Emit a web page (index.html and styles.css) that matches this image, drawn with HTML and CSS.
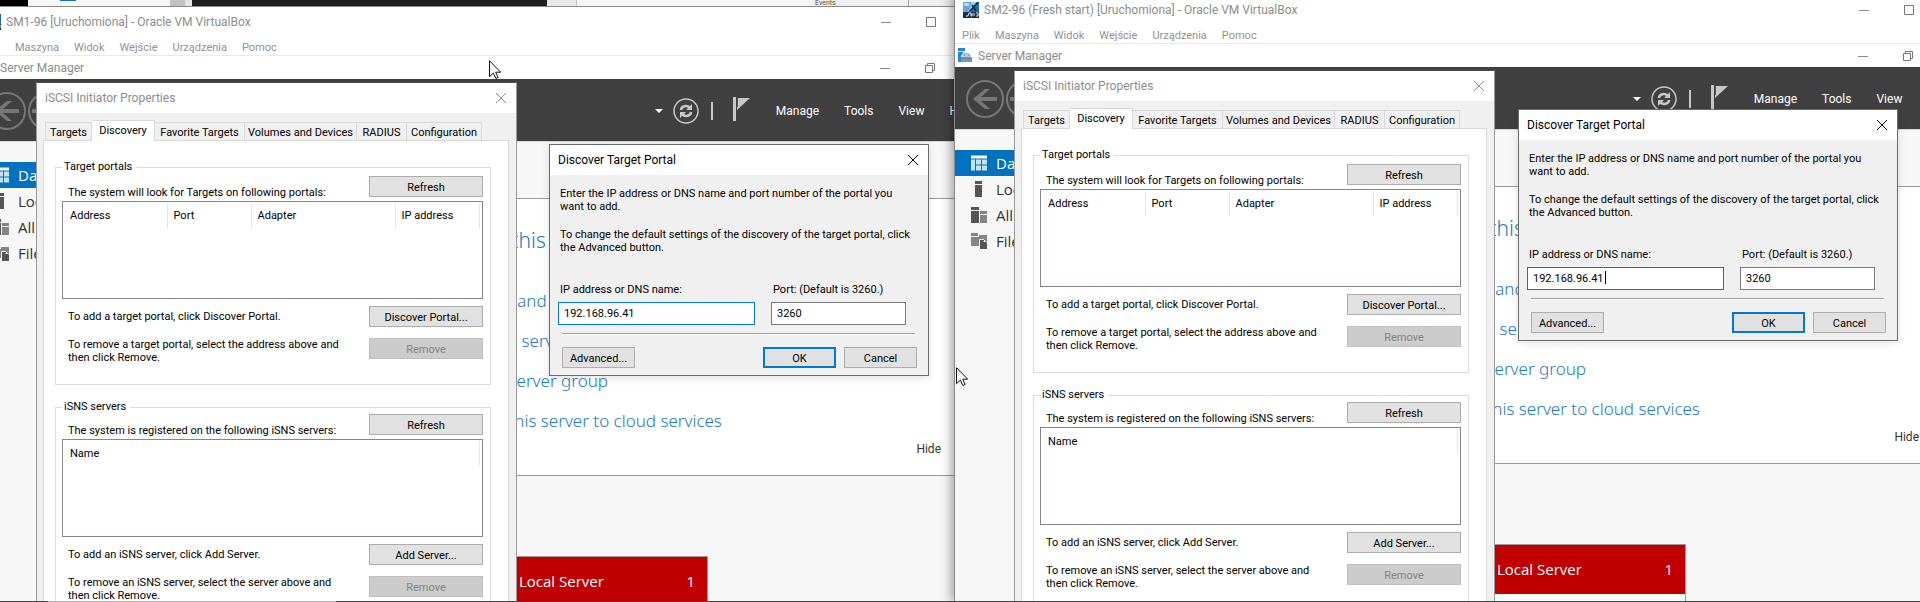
FILE: index.html
```
<!DOCTYPE html>
<html lang="en">
<head>
<meta charset="utf-8">
<title>Oracle VM VirtualBox</title>
<link rel="stylesheet" href="styles.css">
</head>
<body>
<svg class="defs" aria-hidden="true">
  <symbol id="i-vm" viewBox="0 0 16 16">
    <rect width="16" height="16" fill="#1b6fae"/><path d="M0 0h7l2 5-3 5H0z" fill="#5aa9de"/><rect x="1" y="1" width="5" height="3" fill="#c7d3dc"/>
    <path d="M8 0l6 0-5 7-3 2z" fill="#8fd0f5"/><path d="M15 0L7 9M9 3l4 6" stroke="#123" stroke-width="1.5"/><path d="M0 10h16v6H0z" fill="#17314a"/>
    <path d="M3 14h2l1-3h2v3h1v-3m2 0v3m2-3h2v3h-2" stroke="#dfe9f1" fill="none"/>
  </symbol>
  <symbol id="i-sm" viewBox="0 0 15 15">
    <rect width="7" height="3" fill="#1e88dc"/><path d="M0 4h6l-3 4v6H0z" fill="#1e88dc"/><path d="M3 9h11v5H3z" fill="#7b98b0"/>
    <path d="M6 8V6h5v2M3 10.500h11" fill="none" stroke="#6485a0"/><path d="M4 8h9" stroke="#7b98b0"/>
  </symbol>
  <symbol id="i-min" viewBox="0 0 10 10"><path d="M0 5.500h10" stroke="#8a8a8a"/></symbol>
  <symbol id="i-max" viewBox="0 0 10 10"><path d="M.5.5h9v9h-9z" fill="none" stroke="#777"/></symbol>
  <symbol id="i-restore" viewBox="0 0 10 10"><path d="M.5 2.500h7v7h-7zM2.500 2.500v-2h7v7h-2" fill="none" stroke="#777"/></symbol>
  <symbol id="i-close" viewBox="0 0 10 10"><path d="M0 0l10 10M10 0L0 10" fill="none" stroke="currentColor"/></symbol>
  <symbol id="i-back" viewBox="0 0 38 38"><circle cx="19" cy="19" r="18" fill="none" stroke="#777" stroke-width="2"/><path d="M7 19L19 9h5l-9 8h16v4H15l9 8h-5z" fill="#777"/></symbol>
  <symbol id="i-fwd" viewBox="0 0 38 38"><circle cx="19" cy="19" r="18" fill="none" stroke="#777" stroke-width="2"/><path d="M31 19L19 9h-5l9 8H4v4h19l-9 8h5z" fill="#777"/></symbol>
  <symbol id="i-caret" viewBox="0 0 8 4"><path d="M0 0h8L4 4z" fill="#fff"/></symbol>
  <symbol id="i-refresh" viewBox="0 0 26 26"><circle cx="13" cy="13" r="12" fill="none" stroke="#c8c8c8" stroke-width="1.500"/>
    <path d="M8 12c0-4 6-5 8.500-2.500M18 14c0 4-6 5-8.500 2.500" fill="none" stroke="#c8c8c8" stroke-width="2.500"/><path d="M19 6v6h-6zM7 20v-6h6z" fill="#c8c8c8"/></symbol>
  <symbol id="i-flag" viewBox="0 0 17 24"><path d="M0 0h3v24H0zM4 1h13L4 13z" fill="#c8c8c8"/><path d="M4.500 1v9" stroke="#555"/></symbol>
  <symbol id="i-dash" viewBox="0 0 16 15"><path d="M0 0h16v3H0z" fill="#fff"/><path d="M0 4h4v11H0zM5 4h5v5H5zM11 4h5v5h-5zM5 10h5v5H5zM11 10h5v5h-5z" fill="#c5e2f4"/></symbol>
  <symbol id="i-local" viewBox="0 0 16 16"><path d="M4 0h7v3H4zM4 4h7v12H4z" fill="#555"/></symbol>
  <symbol id="i-all" viewBox="0 0 16 16"><path d="M0 0h8v3H0zM0 4h8v12H0z" fill="#555"/><path d="M9 4h7v3H9zM9 8h7v8H9z" fill="#858585"/></symbol>
  <symbol id="i-file" viewBox="0 0 16 16"><path d="M0 0h7v3H0zM0 4h8v9H0zM8 2h8v7H8z" fill="#858585"/><path d="M9 7h4l3 3v6H9z" fill="#555"/><path d="M8.500 16V6.500h4l2 2h-2" fill="none" stroke="#f7f7f7"/></symbol>
  <symbol id="i-pointer" viewBox="0 0 12 19"><path d="M.5.7v16l3.800-3.600 2.600 5.400 2.300-1-2.500-5.300h5z" fill="#fff" stroke="#111"/></symbol>
</svg>

<div class="desktop">
  <div class="backdrop"><i class="b-black"></i><i class="b-page"></i><i class="b-grey"></i><i class="b-pale"></i><i class="b-dark"></i><i class="b-edge"></i><i class="b-wide"></i><span class="b-events">Events</span><i class="b-rest"></i></div>

  <section class="vm vm-one">
    <header class="vm-title"><svg class="ico16"><use href="#i-vm"/></svg><span class="grow">SM1-96 [Uruchomiona] - Oracle VM VirtualBox</span>
      <button class="wbtn" aria-label="Minimize"><svg><use href="#i-min"/></svg></button><button class="wbtn" aria-label="Maximize"><svg><use href="#i-max"/></svg></button></header>
    <nav class="vm-menu"><a href="#">Maszyna</a><a href="#">Widok</a><a href="#">Wejście</a><a href="#">Urządzenia</a><a href="#">Pomoc</a></nav>
    <div class="sm-title"><svg class="ico15"><use href="#i-sm"/></svg><span class="grow">Server Manager</span>
      <button class="wbtn" aria-label="Minimize"><svg><use href="#i-min"/></svg></button><button class="wbtn" aria-label="Restore"><svg><use href="#i-restore"/></svg></button></div>
    <div class="sm-head">
      <button class="round" aria-label="Back"><svg><use href="#i-back"/></svg></button><button class="round grow" aria-label="Forward"><svg><use href="#i-fwd"/></svg></button>
      <svg class="caret"><use href="#i-caret"/></svg><button class="refresh" aria-label="Refresh"><svg><use href="#i-refresh"/></svg></button><i class="bar"></i>
      <button class="flag" aria-label="Notifications"><svg><use href="#i-flag"/></svg></button>
      <nav class="sm-menu"><a href="#">Manage</a><a href="#">Tools</a><a href="#">View</a><a href="#">Help</a></nav>
    </div>
    <div class="sm-body">
      <nav class="side">
        <a class="on" href="#"><svg><use href="#i-dash"/></svg>Dashboard</a><a href="#"><svg><use href="#i-local"/></svg>Local Server</a>
        <a href="#"><svg><use href="#i-all"/></svg>All Servers</a><a href="#"><svg><use href="#i-file"/></svg>File Services</a>
      </nav>
      <main class="content">
        <section class="welcome"><h2>Configure this local server</h2>
          <ul><li><a href="#">Add roles and features</a></li><li><a href="#">Add other servers to manage</a></li><li><a href="#">Create a server group</a></li><li><a href="#">Connect this server to cloud services</a></li></ul>
          <a class="hide" href="#">Hide</a></section>
        <section class="tile"><h3><span>Local Server</span><span>1</span></h3></section>
      </main>
    </div>

    <section class="dialog props">
      <header class="dlg-title dim"><span>iSCSI Initiator Properties</span><button class="x" aria-label="Close"><svg><use href="#i-close"/></svg></button></header>
      <div class="tabs" role="tablist"><button>Targets</button><button class="sel">Discovery</button><button>Favorite Targets</button><button>Volumes and Devices</button><button>RADIUS</button><button>Configuration</button></div>
      <div class="panel">
        <fieldset><legend>Target portals</legend>
          <div class="row top"><p>The system will look for Targets on following portals:</p><button class="btn">Refresh</button></div>
          <div class="list"><table><tr><th class="c1">Address</th><th class="c2">Port</th><th class="c3">Adapter</th><th>IP address</th></tr></table></div>
          <div class="row mid"><p>To add a target portal, click Discover Portal.</p><button class="btn">Discover Portal...</button></div>
          <div class="row"><p>To remove a target portal, select the address above and<br>then click Remove.</p><button class="btn" disabled>Remove</button></div>
        </fieldset>
        <fieldset><legend>iSNS servers</legend>
          <div class="row top"><p>The system is registered on the following iSNS servers:</p><button class="btn">Refresh</button></div>
          <div class="list"><table><tr><th>Name</th></tr></table></div>
          <div class="row mid"><p>To add an iSNS server, click Add Server.</p><button class="btn">Add Server...</button></div>
          <div class="row"><p>To remove an iSNS server, select the server above and<br>then click Remove.</p><button class="btn" disabled>Remove</button></div>
        </fieldset>
      </div>
    </section>

    <section class="dialog discover">
      <header class="dlg-title"><span>Discover Target Portal</span><button class="x" aria-label="Close"><svg><use href="#i-close"/></svg></button></header>
      <div class="dlg-body">
        <p>Enter the IP address or DNS name and port number of the portal you<br>want to add.</p>
        <p>To change the default settings of the discovery of the target portal, click<br>the Advanced button.</p>
        <div class="fields"><div class="field"><label for="ip1">IP address or DNS name:</label><input class="active" id="ip1" value="192.168.96.41"></div>
          <div class="field"><label for="port1">Port: (Default is 3260.)</label><input id="port1" value="3260"></div></div>
        <hr>
        <div class="actions"><button class="btn">Advanced...</button><button class="btn ok">OK</button><button class="btn">Cancel</button></div>
      </div>
    </section>
  </section>

  <section class="vm vm-two">
    <header class="vm-title"><svg class="ico16"><use href="#i-vm"/></svg><span class="grow">SM2-96 (Fresh start) [Uruchomiona] - Oracle VM VirtualBox</span>
      <button class="wbtn" aria-label="Minimize"><svg><use href="#i-min"/></svg></button><button class="wbtn" aria-label="Maximize"><svg><use href="#i-max"/></svg></button></header>
    <nav class="vm-menu"><a href="#">Plik</a><a href="#">Maszyna</a><a href="#">Widok</a><a href="#">Wejście</a><a href="#">Urządzenia</a><a href="#">Pomoc</a></nav>
    <div class="sm-title"><svg class="ico15"><use href="#i-sm"/></svg><span class="grow">Server Manager</span>
      <button class="wbtn" aria-label="Minimize"><svg><use href="#i-min"/></svg></button><button class="wbtn" aria-label="Restore"><svg><use href="#i-restore"/></svg></button></div>
    <div class="sm-head">
      <button class="round" aria-label="Back"><svg><use href="#i-back"/></svg></button><button class="round grow" aria-label="Forward"><svg><use href="#i-fwd"/></svg></button>
      <svg class="caret"><use href="#i-caret"/></svg><button class="refresh" aria-label="Refresh"><svg><use href="#i-refresh"/></svg></button><i class="bar"></i>
      <button class="flag" aria-label="Notifications"><svg><use href="#i-flag"/></svg></button>
      <nav class="sm-menu"><a href="#">Manage</a><a href="#">Tools</a><a href="#">View</a><a href="#">Help</a></nav>
    </div>
    <div class="sm-body">
      <nav class="side">
        <a class="on" href="#"><svg><use href="#i-dash"/></svg>Dashboard</a><a href="#"><svg><use href="#i-local"/></svg>Local Server</a>
        <a href="#"><svg><use href="#i-all"/></svg>All Servers</a><a href="#"><svg><use href="#i-file"/></svg>File Services</a>
      </nav>
      <main class="content">
        <section class="welcome"><h2>Configure this local server</h2>
          <ul><li><a href="#">Add roles and features</a></li><li><a href="#">Add other servers to manage</a></li><li><a href="#">Create a server group</a></li><li><a href="#">Connect this server to cloud services</a></li></ul>
          <a class="hide" href="#">Hide</a></section>
        <section class="tile"><h3><span>Local Server</span><span>1</span></h3></section>
      </main>
    </div>

    <section class="dialog props">
      <header class="dlg-title dim"><span>iSCSI Initiator Properties</span><button class="x" aria-label="Close"><svg><use href="#i-close"/></svg></button></header>
      <div class="tabs" role="tablist"><button>Targets</button><button class="sel">Discovery</button><button>Favorite Targets</button><button>Volumes and Devices</button><button>RADIUS</button><button>Configuration</button></div>
      <div class="panel">
        <fieldset><legend>Target portals</legend>
          <div class="row top"><p>The system will look for Targets on following portals:</p><button class="btn">Refresh</button></div>
          <div class="list"><table><tr><th class="c1">Address</th><th class="c2">Port</th><th class="c3">Adapter</th><th>IP address</th></tr></table></div>
          <div class="row mid"><p>To add a target portal, click Discover Portal.</p><button class="btn">Discover Portal...</button></div>
          <div class="row"><p>To remove a target portal, select the address above and<br>then click Remove.</p><button class="btn" disabled>Remove</button></div>
        </fieldset>
        <fieldset><legend>iSNS servers</legend>
          <div class="row top"><p>The system is registered on the following iSNS servers:</p><button class="btn">Refresh</button></div>
          <div class="list"><table><tr><th>Name</th></tr></table></div>
          <div class="row mid"><p>To add an iSNS server, click Add Server.</p><button class="btn">Add Server...</button></div>
          <div class="row"><p>To remove an iSNS server, select the server above and<br>then click Remove.</p><button class="btn" disabled>Remove</button></div>
        </fieldset>
      </div>
    </section>

    <section class="dialog discover">
      <header class="dlg-title"><span>Discover Target Portal</span><button class="x" aria-label="Close"><svg><use href="#i-close"/></svg></button></header>
      <div class="dlg-body">
        <p>Enter the IP address or DNS name and port number of the portal you<br>want to add.</p>
        <p>To change the default settings of the discovery of the target portal, click<br>the Advanced button.</p>
        <div class="fields"><div class="field"><label for="ip2">IP address or DNS name:</label><input class="active" id="ip2" value="192.168.96.41"><i class="cursor"></i></div>
          <div class="field"><label for="port2">Port: (Default is 3260.)</label><input id="port2" value="3260"></div></div>
        <hr>
        <div class="actions"><button class="btn">Advanced...</button><button class="btn ok">OK</button><button class="btn">Cancel</button></div>
      </div>
    </section>
  </section>

  <svg class="pointer p-one"><use href="#i-pointer"/></svg>
  <svg class="pointer p-two"><use href="#i-pointer"/></svg>
  <div class="taskline"><i></i></div>
</div>
</body>
</html>
```
FILE: styles.css
```
* { box-sizing: border-box; }
body { margin: 0; font: 12px/16px Roboto, "Liberation Sans", sans-serif; color: #000; }
h2, h3, p, ul { margin: 0; padding: 0; font-weight: 400; list-style: none; }
a { color: inherit; text-decoration: none; }
button { font: inherit; color: inherit; margin: 0; padding: 0; border: 0; background: none; }
svg { display: block; width: 100%; height: 100%; }
.defs { position: absolute; width: 0; height: 0; }
.grow { flex: 1; }

.desktop { position: relative; height: 100vh; overflow: hidden; background: #f0f0f0; white-space: nowrap; }

/* windows behind the two machines */
.backdrop { display: flex; height: 6px; }
.b-black { width: 28px; background: #000; }
.b-page { width: 142px; background: linear-gradient(90deg, #f7f7f7 32px, #1273b8 32px 48px, #f7f7f7 48px); background-size: 100% 1px; background-repeat: no-repeat; background-color: #f7f7f7; }
.b-grey { width: 15px; background: #c2c2c2; }
.b-pale { width: 7px; background: #e6e6e6; }
.b-dark { width: 355px; background: #1e1e1e; }
.b-edge { width: 30px; background: #e8e8e8; border-right: 1px solid #c0c0c0; }
.b-wide { width: 232px; background: #f7f7f7; }
.b-events { width: 100px; padding-left: 6px; font-size: 7px; line-height: 7px; color: #555; background: #f0f0f0; border-right: 1px solid #aaa; }
.b-rest { flex: 1; background: #eee; }

.vm { position: absolute; bottom: 0; width: calc(50% + 64px); overflow: hidden; background: #fff; display: flex; flex-direction: column; }
.vm-one { left: -23px; top: 6px; border-top: 1px solid #8a8a8a; }
.vm-two { left: calc(50% - 6px); top: -5px; width: calc(50% + 65px); border-left: 1px solid #8a8a8a; overflow: visible; box-shadow: -3px 0 10px rgba(0, 0, 0, .35); }

.vm-title { display: flex; align-items: center; height: 30px; padding: 0 65px 0 8px; gap: 5px; color: #8c8c8c; }
.ico16 { width: 16px; height: 16px; flex: none; }
.ico15 { width: 15px; height: 15px; flex: none; }
.wbtn { width: 10px; height: 10px; margin-left: 30px; }
.vm-menu { display: flex; align-items: center; gap: 15px; height: 19px; padding: 3px 7px 0; border-bottom: 1px solid #eaeaea; color: #929292; font-size: 11px; }
.vm-one .vm-menu { padding-left: 38px; }
.sm-title { display: flex; align-items: center; height: 23px; padding: 0 66px 0 3px; gap: 5px; color: #8c8c8c; }

.sm-head { display: flex; align-items: center; height: 63px; flex: none; padding: 1px 27px 0 11px; background: #404040; border-bottom: 1px solid #d5d5d5; color: #fff; }
.round { height: 38px; width: 38px; margin-right: 2px; flex: none; }
.round.grow { flex: 1; }
.round svg { width: 38px; }
.caret { width: 8px; height: 4px; flex: none; }
.refresh { width: 26px; height: 26px; margin: 0 12px 0 10px; flex: none; }
.bar { width: 2px; height: 18px; background: #c8c8c8; }
.flag { width: 17px; height: 24px; margin: 0 26px 4px 20px; flex: none; }
.sm-menu { display: flex; gap: 25px; padding-top: 1px; }

.sm-body { display: flex; flex: 1; min-height: 0; background: #f7f7f7; }
.side { width: 220px; flex: none; padding-top: 20px; color: #333; font: 15px/26px "Open Sans", sans-serif; }
.side a { display: flex; align-items: center; gap: 9px; height: 26px; padding-left: 16px; }
.side svg { width: 16px; height: 16px; }
.side .on { background: #0072c0; color: #fff; }
.content { flex: 1; min-width: 0; padding-top: 56px; }
.welcome { background: #fff; border: 1px solid #999; border-right: 0; padding: 28px 60px 18px 242px; color: #1e78bd; font-family: "Noto Sans", sans-serif; }
.welcome h2 { margin-left: -28px; font-size: 21px; line-height: 26px; font-weight: 300; }
.welcome ul { margin-top: 28px; font-size: 17px; line-height: 40px; font-weight: 300; }
.hide { display: block; text-align: right; color: #333; font: 12px/16px Roboto, sans-serif; }
.tile { width: 291px; margin: 80px 0 0 220px; background: #fff; border: 1px solid #999; height: 200px; }
.tile h3 { display: flex; justify-content: space-between; padding: 0 12px 0 101px; background: #c00000; color: #fff; font: 15px/49px "Open Sans", sans-serif; }

.dialog { position: absolute; background: #f0f0f0; border: 1px solid #9a9a9a; font-size: 11px; line-height: 13px; }
.props { left: 59px; top: 75px; width: 481px; border-top-color: #4d4d4d; }
.discover { width: 380px; border-color: #6a6a6a; box-shadow: 0 2px 8px rgba(0, 0, 0, .12); }
.vm-one .discover { left: 572px; top: 137px; }
.vm-two .discover { left: 563px; top: 114px; }
.dlg-title { display: flex; align-items: center; justify-content: space-between; height: 30px; padding: 0 10px 0 8px; background: #fff; font-size: 12px; }
.dim { color: #8c8c8c; }
.x { width: 10px; height: 10px; }

.tabs { display: grid; grid-template-columns: 47px 63px 90px 112px 50px 75px; align-items: end; margin: 7px 0 -1px 8px; position: relative; }
.tabs button { height: 19px; border: 1px solid #d9d9d9; border-left-width: 0; border-bottom-width: 0; }
.tabs button:first-child { border-left-width: 1px; }
.tabs .sel { height: 21px; padding-bottom: 2px; background: #fff; }
.panel { margin: 0 7px 0 6px; padding: 19px 17px 30px 11px; background: #fff; border: 1px solid #d9d9d9; }
fieldset { margin: 0; padding: 2px 7px 20px 6px; border: 1px solid #dcdcdc; }
fieldset + fieldset { margin-top: 15px; padding-top: 0; }
legend { padding: 0 4px 0 2px; line-height: 14px; }
.row { display: flex; justify-content: space-between; align-items: flex-start; padding-left: 6px; }
.top { height: 25px; }
.top p { align-self: flex-end; line-height: 16px; }
.mid { align-items: center; margin: 7px 0 11px; }
.btn { width: 114px; height: 21px; padding-top: 1px; background: #e1e1e1; border: 1px solid #adadad; }
.btn:disabled { background: #ccc; border-color: #bfbfbf; color: #838383; }
.list { height: 98px; padding: 1px; border: 1px solid #828790; }
table { width: calc(100% - 1px); border-collapse: collapse; table-layout: fixed; }
th { height: 25px; padding: 0 0 0 6px; text-align: left; font-weight: 400; border-right: 1px solid #e5e5e5; }
.c1 { width: 103px; }
.c2 { width: 84px; }
.c3 { width: 144px; }

.dlg-body { padding: 12px 11px 7px 8px; }
.dlg-body p { margin: 0 0 15px 2px; }
.fields { display: grid; grid-template-columns: 197px 135px; gap: 16px; margin-top: 28px; }
.field { position: relative; display: grid; gap: 4px; }
.field label { padding-left: 2px; line-height: 16px; }
.field input { width: 100%; height: 23px; padding: 0 5px; border: 1px solid #7a7a7a; border-radius: 0; background: #fff; font: 11px/13px Roboto, sans-serif; color: #000; }
.field .active { border-color: #0078d7; }
.cursor { position: absolute; left: 78px; bottom: 6px; width: 1px; height: 13px; background: #000; }
hr { height: 2px; margin: 8px 2px 12px 4px; border: 0; border-top: 1px solid #a0a0a0; background: #fff; }
.actions { display: flex; gap: 8px; padding-left: 4px; }
.actions .btn { width: 73px; }
.actions .ok { margin-left: auto; border: 2px solid #0078d7; }

.pointer { position: absolute; width: 12px; height: 19px; }
.p-one { left: 489px; top: 60px; }
.p-two { left: calc(50% - 4px); top: 367px; }
.taskline { position: absolute; left: 0; right: 0; bottom: 0; height: 1px; padding-left: 48px; background: #444; }
.taskline i { display: block; width: 288px; height: 1px; background: #bbb; }
```
